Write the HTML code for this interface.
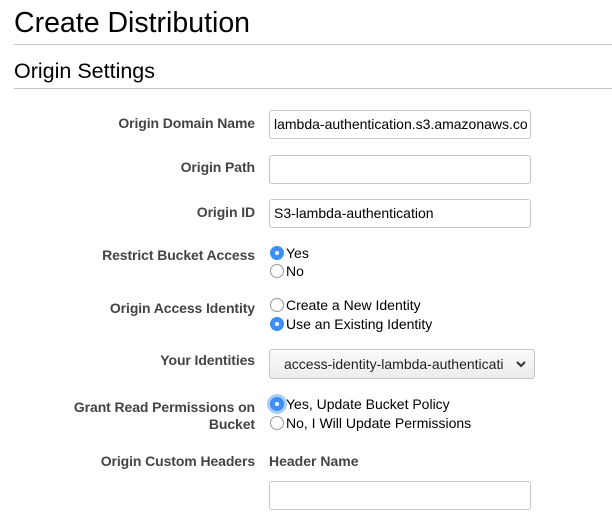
<html><head><style>
body{margin:0;width:612px;height:530px;background:#fff;font-family:"Liberation Sans",sans-serif;position:relative;overflow:hidden;color:#000}
.a{position:absolute;white-space:nowrap}
.lbl{position:absolute;right:357px;font-weight:bold;font-size:14px;color:#444;text-align:right;white-space:nowrap;letter-spacing:-0.1px}
.in{position:absolute;left:269px;width:262px;height:29px;border:1px solid #c6c6c6;border-radius:3px;box-sizing:border-box;font-size:14px;line-height:27px;padding-left:4px;overflow:hidden;white-space:nowrap}
.r{position:absolute;left:270px;width:14px;height:14px;border-radius:50%;box-sizing:border-box;border:1px solid #999;background:#fff}
.r.on{background:#3b8ff6;border-color:#3b8ff6}
.r.on::after{content:"";position:absolute;left:4px;top:4px;width:4px;height:4px;border-radius:50%;background:#fff}
.rt{position:absolute;left:286px;font-size:14px;white-space:nowrap}
</style></head><body>
<div class="a" style="left:14px;top:7px;font-size:28.5px">Create Distribution</div>
<div class="a" style="left:14px;top:44px;width:598px;height:1px;background:#c8c8c8"></div>
<div class="a" style="left:14px;top:59px;font-size:21.5px">Origin Settings</div>
<div class="a" style="left:14px;top:88px;width:598px;height:1px;background:#c8c8c8"></div>

<div class="lbl" style="top:115px">Origin Domain Name</div>
<div class="in" style="top:110px">lambda-authentication.s3.amazonaws.co</div>
<div class="lbl" style="top:159px">Origin Path</div>
<div class="in" style="top:155px"></div>
<div class="lbl" style="top:204px">Origin ID</div>
<div class="in" style="top:199px">S3-lambda-authentication</div>

<div class="lbl" style="top:247px">Restrict Bucket Access</div>
<div class="r on" style="top:246px"></div><div class="rt" style="top:245px">Yes</div>
<div class="r" style="top:264px"></div><div class="rt" style="top:263px">No</div>

<div class="lbl" style="top:300px">Origin Access Identity</div>
<div class="r" style="top:298px"></div><div class="rt" style="top:297px">Create a New Identity</div>
<div class="r on" style="top:317px"></div><div class="rt" style="top:316px">Use an Existing Identity</div>

<div class="lbl" style="top:352px">Your Identities</div>
<div class="a" style="left:269px;top:349px;width:266px;height:30px;box-sizing:border-box;border:1px solid #c4c4c4;border-radius:3px;background:linear-gradient(#fafafa,#ececec);font-size:14px;line-height:28px;padding-left:14px;color:#222;overflow:hidden">access-identity-lambda-authenticati<svg style="position:absolute;right:8px;top:11px" width="10" height="7" viewBox="0 0 10 7"><path d="M1 1l4 4 4-4" stroke="#333" stroke-width="2" fill="none"/></svg></div>

<div class="lbl" style="top:399px;line-height:17px">Grant Read Permissions on<br>Bucket</div>
<div class="r on" style="top:397px;box-shadow:0 0 0 3px #a9cdf7"></div><div class="rt" style="top:396px">Yes, Update Bucket Policy</div>
<div class="r" style="top:416px"></div><div class="rt" style="top:415px">No, I Will Update Permissions</div>

<div class="lbl" style="top:453px">Origin Custom Headers</div>
<div class="a" style="left:269px;top:453px;font-weight:bold;font-size:14px;color:#444">Header Name</div>
<div class="in" style="top:481px"></div>
</body></html>
